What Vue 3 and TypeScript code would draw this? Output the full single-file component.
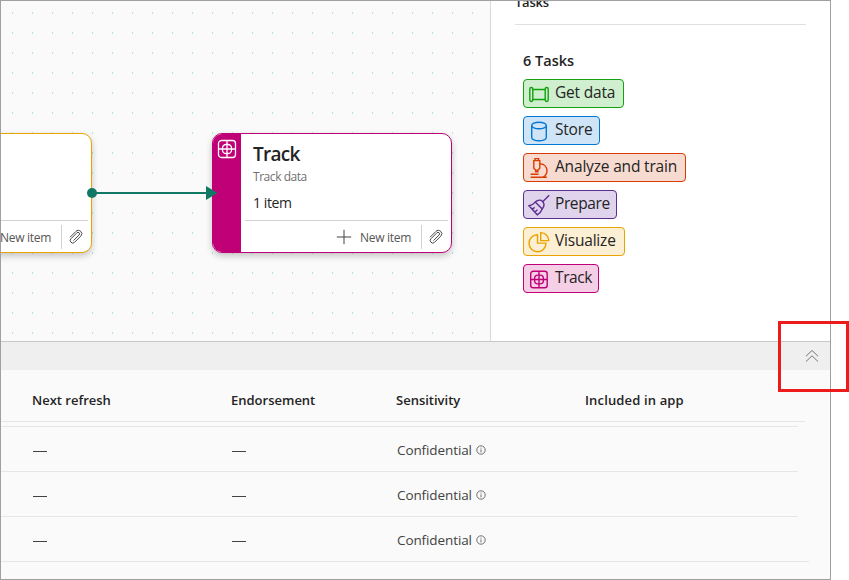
<script setup lang="ts">
interface Task {
  name: string
  kind: string
  width: number
}

const tasks: Task[] = [
  { name: 'Get data', kind: 'get', width: 101 },
  { name: 'Store', kind: 'store', width: 77 },
  { name: 'Analyze and train', kind: 'analyze', width: 163 },
  { name: 'Prepare', kind: 'prepare', width: 94 },
  { name: 'Visualize', kind: 'visualize', width: 102 },
  { name: 'Track', kind: 'track', width: 76 },
]

const rows: string[] = ['Confidential', 'Confidential', 'Confidential']
</script>

<template>
  <div class="page">
    <div class="frame">
      <div class="top">
        <div class="canvas">
          <div class="card card-visualize">
            <div class="card-main">
              <div class="card-body"></div>
              <div class="card-footer">
                <span class="new-item">New item</span>
                <span class="clip">
                  <svg width="16" height="16" viewBox="0 0 16 16">
                    <path d="M2 8.300 7.900 2.400a3.300 3.300 0 0 1 4.900 0 3.300 3.300 0 0 1 0 4.700L6.600 13.300a2.500 2.500 0 0 1-3.600-3.600l5.900-5.900a1.500 1.500 0 0 1 2.200 2.200L5.400 11.600" />
                  </svg>
                </span>
              </div>
            </div>
          </div>

          <div class="card card-track">
            <div class="card-strip">
              <svg width="20" height="20" viewBox="0 0 20 20">
                <rect x="1.500" y="1.500" width="17" height="17" rx="3" />
                <rect x="5.500" y="5.500" width="9" height="9" rx="3.600" />
                <path d="M10 1.500v17M1.500 10h17" />
              </svg>
            </div>
            <div class="card-main">
              <div class="card-body">
                <div class="card-title">Track</div>
                <div class="card-sub">Track data</div>
                <div class="card-count">1 item</div>
              </div>
              <div class="card-footer">
                <svg class="plus" width="16" height="16" viewBox="0 0 16 16"><path d="M8 .8v14.400M.8 8h14.400" /></svg>
                <span class="new-item">New item</span>
                <span class="clip">
                  <svg width="16" height="16" viewBox="0 0 16 16">
                    <path d="M2 8.300 7.900 2.400a3.300 3.300 0 0 1 4.900 0 3.300 3.300 0 0 1 0 4.700L6.600 13.300a2.500 2.500 0 0 1-3.600-3.600l5.900-5.900a1.500 1.500 0 0 1 2.200 2.200L5.400 11.600" />
                  </svg>
                </span>
              </div>
            </div>
          </div>

          <svg class="connector" width="140" height="20" viewBox="0 0 140 20">
            <path d="M6 10h120" stroke="#117865" stroke-width="2" />
            <circle cx="6" cy="10" r="5" fill="#117865" />
            <path d="M120 3v14l11.500-7z" fill="#117865" />
          </svg>
        </div>

        <aside class="panel">
          <div class="panel-head"><span>Tasks</span></div>
          <div class="panel-title">6 Tasks</div>
          <ul class="tags">
            <li v-for="t in tasks" :key="t.name" class="tag" :class="t.kind" :style="{ width: t.width + 'px' }">
              <svg width="22" height="22" viewBox="0 0 22 22">
                <template v-if="t.kind === 'get'">
                  <rect x="1.800" y="4.500" width="3" height="14" rx="1.400" />
                  <rect x="17.200" y="4.500" width="3" height="14" rx="1.400" />
                  <path d="M4.800 6.500h12.400M4.800 16.500h12.400" />
                </template>
                <template v-else-if="t.kind === 'store'">
                  <ellipse cx="11" cy="5.500" rx="7.300" ry="3.300" />
                  <path d="M3.700 5.500v12c0 1.800 3.200 3.300 7.300 3.300s7.300-1.500 7.300-3.300v-12" />
                </template>
                <template v-else-if="t.kind === 'analyze'">
                  <path d="M5.800 3.600h6v7.700l-1.700 1.800H7.500l-1.700-1.800zM7 1.600h3.600v2H7zM7.700 13.100h2.200v1.700H7.700z" />
                  <path d="M12 6.800c4.300.3 7 3.300 7 7 0 2.700-1.500 5-4 6.400M2.600 20.300h16.200M2.600 17.300h8" />
                </template>
                <template v-else-if="t.kind === 'prepare'">
                  <path d="m21.200 1.200-6 6M7.200 8.100c2.600-2.300 5.800-2.400 7.400-.7s1.700 4.900-.4 7.600" />
                  <path d="M7.200 8.100c-1.700 2-3.500 3.200-6.100 3.700l8.200 9c2.600-1.500 4-3.300 4.900-5.800zM4.300 15.200l2.300-1.800M6.900 18l2.600-2.200" />
                </template>
                <template v-else-if="t.kind === 'visualize'">
                  <path d="M9.500 3.700v8.400h8.500A8.500 8.500 0 1 1 9.500 3.700z" />
                  <path d="M12.700 1.600a8.200 8.200 0 0 1 8.100 8h-8.100z" />
                </template>
                <template v-else>
                  <rect x="2.700" y="3.200" width="16.500" height="16.500" rx="2.500" />
                  <rect x="6.600" y="7.100" width="8.800" height="8.800" rx="3.400" />
                  <path d="M11 3.200v16.500M2.700 11.500h16.500" />
                </template>
              </svg>
              <span class="tag-label">{{ t.name }}</span>
            </li>
          </ul>
        </aside>
      </div>

      <div class="bar">
        <svg width="14" height="14" viewBox="0 0 14 14"><path d="m1 7.200 6-5.700 6 5.700M1 12.500l6-5.700 6 5.700" /></svg>
      </div>

      <div class="table">
        <div class="row head">
          <span>Next refresh</span><span>Endorsement</span><span>Sensitivity</span><span class="wide">Included in app</span>
        </div>
        <div v-for="(label, i) in rows" :key="i" class="row">
          <span class="dash"><i></i></span>
          <span class="dash"><i></i></span>
          <span class="sens">
            <em>{{ label }}</em>
            <svg width="10" height="10" viewBox="0 0 10 10"><circle cx="5" cy="5" r="4.200" /><path d="M5 4.400v3M5 2.600v1" /></svg>
          </span>
          <span></span>
        </div>
      </div>
    </div>
    <div class="highlight"></div>
  </div>
</template>

<style>
body {
  background: #fff;
  overflow: hidden;
}
</style>

<style scoped>
.page {
  position: relative;
  width: 849px;
  height: 580px;
  font-family: "Open Sans", "Noto Sans", sans-serif;
  color: #242424;
}
.page * {
  box-sizing: border-box;
}
.frame {
  width: 831px;
  height: 580px;
  border: 1px solid #a0a0a0;
  background: #fafafa;
  display: flex;
  flex-direction: column;
  overflow: hidden;
}
svg {
  fill: none;
  display: block;
  flex: none;
}
.top {
  display: flex;
  height: 340px;
  flex: none;
}
.canvas {
  position: relative;
  width: 490px;
  border-right: 1px solid #d9d9d9;
  overflow: hidden;
  background-color: #fafafa;
  background-image: conic-gradient(from 0deg at 1px 2px, transparent 270deg, #b2e8da 270deg);
  background-size: 20px 20px;
  background-position: 11px 11px;
}
.card {
  position: absolute;
  top: 132px;
  width: 240px;
  height: 120px;
  border: 1px solid #bf0077;
  border-radius: 10px;
  background: #fff;
  box-shadow: 0 3px 7px rgba(0, 0, 0, 0.22);
  display: flex;
  overflow: hidden;
}
.card-visualize {
  left: -149px;
  border-color: #eaa300;
}
.card-track {
  left: 211px;
}
.card-strip {
  width: 28px;
  background: #bf0077;
  padding: 5px 0 0 4px;
}
.card-strip svg {
  stroke: #fff;
  stroke-width: 1.3;
}
.card-main {
  flex: 1;
  padding: 0 3px 0 4px;
}
.card-body {
  height: 87px;
  border-bottom: 1px solid #d1d1d1;
  padding: 6px 0 0 8px;
}
.card-title {
  font-size: 19px;
  font-weight: 600;
  line-height: 28px;
  letter-spacing: -0.7px;
}
.card-sub {
  font-size: 12px;
  line-height: 16px;
  margin-top: 1px;
  color: #707070;
  letter-spacing: -0.45px;
}
.card-count {
  font-size: 14px;
  line-height: 20px;
  margin-top: 8px;
  letter-spacing: -0.4px;
}
.card-footer {
  display: flex;
  justify-content: flex-end;
  align-items: center;
  height: 31px;
  padding-top: 1px;
}
.plus {
  stroke: #424242;
  margin-right: 8px;
}
.new-item {
  font-size: 12px;
  color: #555;
  width: 51px;
  white-space: nowrap;
  letter-spacing: -0.3px;
  margin-right: 10px;
}
.clip {
  width: 27px;
  height: 24px;
  border-left: 1px solid #d1d1d1;
  padding: 4px 0 0 6px;
}
.clip svg {
  stroke: #424242;
  stroke-width: 0.95;
}
.connector {
  position: absolute;
  left: 85px;
  top: 182px;
}
.panel {
  flex: 1;
  background: #fff;
  padding: 0 24px;
}
.panel-head {
  height: 24px;
  border-bottom: 1px solid #e0e0e0;
  font-size: 13px;
  font-weight: 600;
  line-height: 18px;
  overflow: hidden;
}
.panel-head span {
  display: block;
  margin-top: -8px;
  letter-spacing: -0.25px;
}
.panel-title {
  font-size: 14.5px;
  font-weight: 600;
  line-height: 20px;
  margin: 26px 0 8px 8px;
  letter-spacing: 0;
}
.tags {
  list-style: none;
  margin: 0 0 0 8px;
  padding: 0;
  display: flex;
  flex-direction: column;
  gap: 8px;
}
.tag {
  height: 29px;
  border: 1px solid;
  border-radius: 4px;
  display: flex;
  align-items: center;
  padding: 0 0 0 4px;
}
.tag svg {
  stroke: currentColor;
  stroke-width: 1.4;
  margin-right: 5px;
}
.tag-label {
  color: #242424;
  font-size: 15.5px;
  line-height: 20px;
  white-space: nowrap;
  margin-top: -4px;
  letter-spacing: -0.2px;
}
.analyze .tag-label {
  letter-spacing: -0.18px;
}
.prepare .tag-label,
.track .tag-label {
  letter-spacing: -0.4px;
}
.get { color: #13a10e; background: #cfefce; }
.store { color: #0078d4; background: #cfe5f7; }
.analyze { color: #da3b01; background: #f8dbd0; }
.prepare { color: #5c2e91; background: #dfd4ec; }
.visualize { color: #eaa300; background: #fcefd3; }
.track { color: #bf0077; background: #f5cfe6; }
.bar {
  height: 29px;
  flex: none;
  border-top: 1px solid #c8c8c8;
  background: #efefef;
  display: flex;
  justify-content: flex-end;
  align-items: center;
  padding-right: 11px;
}
.bar svg {
  stroke: #757575;
}
.table {
  flex: 1;
}
.row {
  display: grid;
  grid-template-columns: 199px 165px 189px 1fr;
  align-items: center;
  height: 45px;
  width: 797px;
  border-bottom: 1px solid #e6e6e6;
  padding: 2px 0 0 31px;
  font-size: 13.5px;
}
.row:last-child {
  width: 808px;
}
.head {
  height: 52px;
  width: 804px;
  padding-top: 9px;
  font-size: 13px;
  font-weight: 600;
  margin-bottom: 4px;
}
.wide {
  letter-spacing: 0.15px;
}
.head + .row {
  height: 46px;
  border-top: 1px solid #e6e6e6;
}
.dash i {
  display: block;
  width: 14px;
  height: 1px;
  margin: 3px 0 0 1px;
  background: #424242;
}
.sens {
  display: flex;
  align-items: center;
  padding-left: 1px;
  color: #424242;
}
.sens em {
  font-style: normal;
  width: 79px;
  letter-spacing: -0.1px;
}
.sens svg {
  stroke: #616161;
  stroke-width: 0.9;
}
.highlight {
  position: absolute;
  box-sizing: border-box;
  left: 778px;
  top: 321px;
  width: 71px;
  height: 71px;
  border: 3px solid #ed1c1c;
}
</style>
